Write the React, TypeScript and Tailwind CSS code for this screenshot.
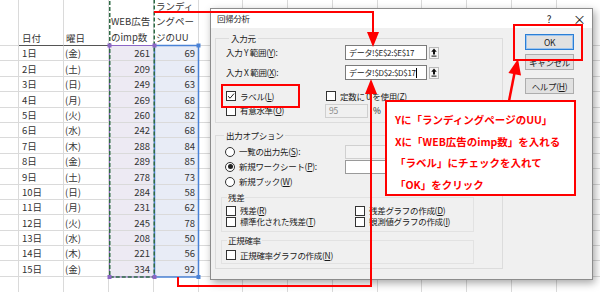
import { Fragment } from "react";

type Row = [string, string, number, number];

const data: Row[] = [
  ["1日", "(金)", 261, 69],
  ["2日", "(土)", 209, 66],
  ["3日", "(日)", 249, 63],
  ["4日", "(月)", 269, 68],
  ["5日", "(火)", 260, 82],
  ["6日", "(水)", 242, 68],
  ["7日", "(木)", 288, 84],
  ["8日", "(金)", 289, 85],
  ["9日", "(土)", 278, 73],
  ["10日", "(日)", 284, 58],
  ["11日", "(月)", 231, 62],
  ["12日", "(火)", 245, 78],
  ["13日", "(水)", 208, 50],
  ["14日", "(木)", 221, 56],
  ["15日", "(金)", 334, 92],
];

const gl = "border-r border-b border-[#dadada]";

const blank = (n: number, key: string) =>
  Array.from({ length: n }, (_, i) => <div key={key + i} className={gl} />);

/* ===================== SHEET ===================== */
function Sheet() {
  return (
    <div className="grid grid-cols-[19px_45px_45px_45px_45px_44px_45px_45px_45px_44px_45px_45px_45px_45px] grid-rows-[46px_repeat(15,15.4px)_20px] text-[9.5px] text-[#333]">
      {/* header */}
      <div className={gl} />
      <div className="flex items-end pl-[3px] leading-[13px] border-r border-b border-[#dadada] border-b-[#555]">
        日付
      </div>
      <div className="flex items-end pl-[2px] leading-[13px] border-r border-b border-[#dadada] border-b-[#555]">
        曜日
      </div>
      <div className={`${gl} flex flex-col justify-end pl-[2px] leading-[15.5px]`}>
        <span>WEB広告</span>
        <span>のimp数</span>
      </div>
      <div className={`${gl} flex flex-col justify-end pl-[2px] leading-[15.5px]`}>
        <span>ランディ</span>
        <span>ングペー</span>
        <span>ジのUU</span>
      </div>
      {blank(9, "h")}

      {/* rows */}
      {data.map(([d, w, x, y], i) => (
        <Fragment key={i}>
          <div className={gl} />
          <div className={`${gl} flex items-end pl-[3px] leading-[13px]`}>{d}</div>
          <div className={`${gl} flex items-end pl-[1px] leading-[13px]`}>{w}</div>
          <div className={`${gl} flex items-end justify-end pr-[3px] leading-[13px] bg-[#edeaf3]`}>{x}</div>
          <div className={`${gl} flex items-end justify-end pr-[3px] leading-[13px] bg-[#e8ecf6]`}>{y}</div>
          {blank(9, "r" + i)}
        </Fragment>
      ))}
      {blank(14, "b")}
    </div>
  );
}

/* ===================== SELECTION ===================== */
function Selection() {
  return (
    <svg className="absolute left-0 top-0 pointer-events-none" width="600" height="292">
      <rect x="109.5" y="45.5" width="45" height="231.5" fill="none" stroke="#8b66c4" strokeWidth="1" />
      <rect x="154.5" y="45.5" width="44" height="231.5" fill="none" stroke="#4a82d6" strokeWidth="1.5" />
      <rect x="109.75" y="-4" width="44.5" height="281" fill="none" stroke="#2e6b45" strokeWidth="1.5" strokeDasharray="4 2" />
      <rect x="107.5" y="43.5" width="4" height="4" fill="#8b66c4" />
      <rect x="152.5" y="43.5" width="4" height="4" fill="#8b66c4" />
      <rect x="107.5" y="275" width="4" height="4" fill="#8b66c4" />
      <rect x="152.5" y="275" width="4" height="4" fill="#8b66c4" />
      <rect x="196.5" y="43.5" width="4" height="4" fill="#4a82d6" />
      <rect x="196.5" y="275" width="4" height="4" fill="#4a82d6" />
    </svg>
  );
}

/* ===================== DIALOG PARTS ===================== */
function Check({ on }: { on?: boolean }) {
  return (
    <span className="flex items-center justify-center w-[10px] h-[10px] border border-[#333] bg-white shrink-0">
      {on && (
        <svg width="8" height="8" viewBox="0 0 8 8">
          <path d="M1 4.2 L3.1 6.2 L7 1.6" fill="none" stroke="#222" strokeWidth="1" />
        </svg>
      )}
    </span>
  );
}

function Radio({ on }: { on?: boolean }) {
  return (
    <span className="flex items-center justify-center w-[10px] h-[10px] rounded-full border border-[#333] bg-white shrink-0">
      {on && <span className="w-[5px] h-[5px] rounded-full bg-[#222]" />}
    </span>
  );
}

// チェックボックス / ラジオ + ラベル
function Opt({
  kind = "check",
  on,
  text,
  k,
  tail = "",
  className = "",
}: {
  kind?: "check" | "radio";
  on?: boolean;
  text: string;
  k: string;
  tail?: string;
  className?: string;
}) {
  return (
    <span className={`flex items-center gap-[4px] ${className}`}>
      {kind === "check" ? <Check on={on} /> : <Radio on={on} />}
      <span>
        {text}(<u>{k}</u>){tail}
      </span>
    </span>
  );
}

function RefInput({ value, cursor }: { value: string; cursor?: boolean }) {
  return (
    <div className="flex items-center gap-[2px]">
      <div className="flex items-center w-[82px] h-[15px] border border-[#7a7a7a] bg-white pl-[3px] text-[8px] tracking-[-0.3px]">
        {value}
        {cursor && <span className="w-px h-[10px] bg-black" />}
      </div>
      <div className="flex items-center justify-center w-[10px] h-[12px] border border-[#bbb] bg-[#f4f4f4]">
        <svg width="6" height="9" viewBox="0 0 6 9">
          <path d="M3 0.5 L5.8 3.8 H4 V6.6 H2 V3.8 H0.2 Z" fill="#111" />
          <rect x="0.5" y="7.6" width="5" height="1" fill="#111" />
        </svg>
      </div>
    </div>
  );
}

function Btn({ label, main }: { label: React.ReactNode; main?: boolean }) {
  return (
    <div
      className={`flex items-center justify-center w-[49px] h-[16px] bg-[#e1e1e1] border ${
        main ? "border-[#2b7fd6] shadow-[inset_0_0_0_1px_#9cc4ee]" : "border-[#adadad]"
      }`}
    >
      {label}
    </div>
  );
}

/* ===================== DIALOG ===================== */
function Dialog() {
  return (
    <div className="absolute left-[210px] top-[8px] w-[383px] h-[272px] flex flex-col border border-[#8c8c8c] bg-[#f0f0f0] shadow-[2px_3px_8px_rgba(0,0,0,0.35)] text-[8.5px] text-[#1a1a1a] tracking-[-0.3px]">
      {/* title */}
      <div className="flex items-center h-[19px] bg-white pl-[6px] pr-[9px]">
        <span>回帰分析</span>
        <span className="ml-auto w-[10px] text-center text-[10px]">?</span>
        <span className="ml-[19px] w-[10px] text-center text-[13px] leading-[13px]">×</span>
      </div>

      <div className="flex flex-1 pl-[4px]">
        {/* left column */}
        <div className="flex flex-col w-[288px] pt-[4px]">
          <fieldset className="border border-[#dcdcdc] pl-[10px] pb-[4px]">
            <legend className="ml-[3px] px-[2px] leading-[12px]">入力元</legend>
            <div className="flex items-center h-[15px] mt-[1px]">
              <span className="w-[119px]">
                入力 Y 範囲(<u>Y</u>):
              </span>
              <RefInput value="データ!$E$2:$E$17" />
            </div>
            <div className="flex items-center h-[15px] mt-[5px]">
              <span className="w-[119px]">
                入力 X 範囲(<u>X</u>):
              </span>
              <RefInput value="データ!$D$2:$D$17" cursor />
            </div>
            <div className="flex items-center h-[12px] mt-[10px]">
              <Opt on text="ラベル" k="L" className="w-[100px]" />
              <Opt text="定数に 0 を使用" k="Z" />
            </div>
            <div className="flex items-center h-[15px] mt-[1px]">
              <Opt text="有意水準" k="O" className="w-[99px]" />
              <span className="flex items-center w-[43px] h-[14px] border border-[#cfcfcf] bg-[#f0f0f0] pl-[3px] text-[#8a8a8a]">
                95
              </span>
              <span className="ml-[5px]">%</span>
            </div>
          </fieldset>

          <fieldset className="mt-[6px] border border-[#dcdcdc] pl-[5px] pb-[4px]">
            <legend className="ml-[3px] px-[2px] leading-[12px]">出力オプション</legend>
            <div className="flex items-center h-[15px] mt-[3px] pl-[4px]">
              <Opt kind="radio" text="一覧の出力先" k="S" tail=":" className="w-[120px]" />
              <span className="w-[94px] h-[14px] border border-[#d0d0d0] bg-[#f3f3f3]" />
            </div>
            <div className="flex items-center h-[15px] pl-[4px]">
              <Opt kind="radio" on text="新規ワークシート" k="P" tail=":" className="w-[120px]" />
              <span className="w-[94px] h-[14px] border border-[#9a9a9a] bg-white" />
            </div>
            <div className="flex items-center h-[15px] pl-[4px]">
              <Opt kind="radio" text="新規ブック" k="W" />
            </div>

            <fieldset className="mt-[2px] w-[253px] border border-[#e2e2e2] pl-[4px] pb-[4px]">
              <legend className="ml-[1px] px-[1px] leading-[12px]">残差</legend>
              <div className="flex items-center h-[11px] mt-[2px]">
                <Opt text="残差" k="R" className="w-[129px]" />
                <Opt text="残差グラフの作成" k="D" />
              </div>
              <div className="flex items-center h-[11px]">
                <Opt text="標準化された残差" k="T" className="w-[129px]" />
                <Opt text="観測値グラフの作成" k="I" />
              </div>
            </fieldset>

            <fieldset className="mt-[2px] w-[253px] border border-[#e2e2e2] pl-[4px] pb-[2px]">
              <legend className="ml-[1px] px-[1px] leading-[12px]">正規確率</legend>
              <div className="flex items-center h-[12px] mt-[3px]">
                <Opt text="正規確率グラフの作成" k="N" />
              </div>
            </fieldset>
          </fieldset>
        </div>

        {/* buttons */}
        <div className="flex flex-col ml-[22px] pt-[6px]">
          <Btn label="OK" main />
          <div className="mt-[4px]">
            <Btn label="キャンセル" />
          </div>
          <div className="mt-[8px]">
            <Btn
              label={
                <span>
                  ヘルプ(<u>H</u>)
                </span>
              }
            />
          </div>
        </div>
      </div>
    </div>
  );
}

/* ===================== ANNOTATIONS ===================== */
function Arrows() {
  return (
    <svg className="absolute left-0 top-0 pointer-events-none" width="600" height="292">
      <path d="M154 12 H373 V34" fill="none" stroke="#ff0000" strokeWidth="2" />
      <polygon points="367,32 379,32 373,47" fill="#ff0000" />
      <path d="M178 277 V286 H371 V93" fill="none" stroke="#ff0000" strokeWidth="2" />
      <polygon points="365,94 377,94 371,79" fill="#ff0000" />
      <line x1="509" y1="101" x2="514.5" y2="73" stroke="#ff0000" strokeWidth="2.5" />
      <polygon points="508.4,73 521,75.6 518,59" fill="#ff0000" />
      <rect x="222" y="85" width="77" height="22" fill="none" stroke="#ff0000" strokeWidth="2" />
      <rect x="514" y="25" width="68" height="35" fill="none" stroke="#ff0000" strokeWidth="2" />
    </svg>
  );
}

function Callout() {
  return (
    <div className="absolute left-[385px] top-[100px] w-[191px] h-[96px] border-2 border-[#ff0000] bg-white pl-[8px] pt-[7px] text-[10.5px] font-bold leading-[21.5px] text-[#ff0000] whitespace-nowrap">
      <div>Yに「ランディングページのUU」</div>
      <div>Xに「WEB広告のimp数」を入れる</div>
      <div>「ラベル」にチェックを入れて</div>
      <div>「OK」をクリック</div>
    </div>
  );
}

export default function App() {
  return (
    <div className="relative w-[600px] h-[292px] overflow-hidden bg-white font-['Noto_Sans_CJK_JP','Noto_Sans',sans-serif]">
      <Sheet />
      <Selection />
      <Dialog />
      <Arrows />
      <Callout />
    </div>
  );
}
